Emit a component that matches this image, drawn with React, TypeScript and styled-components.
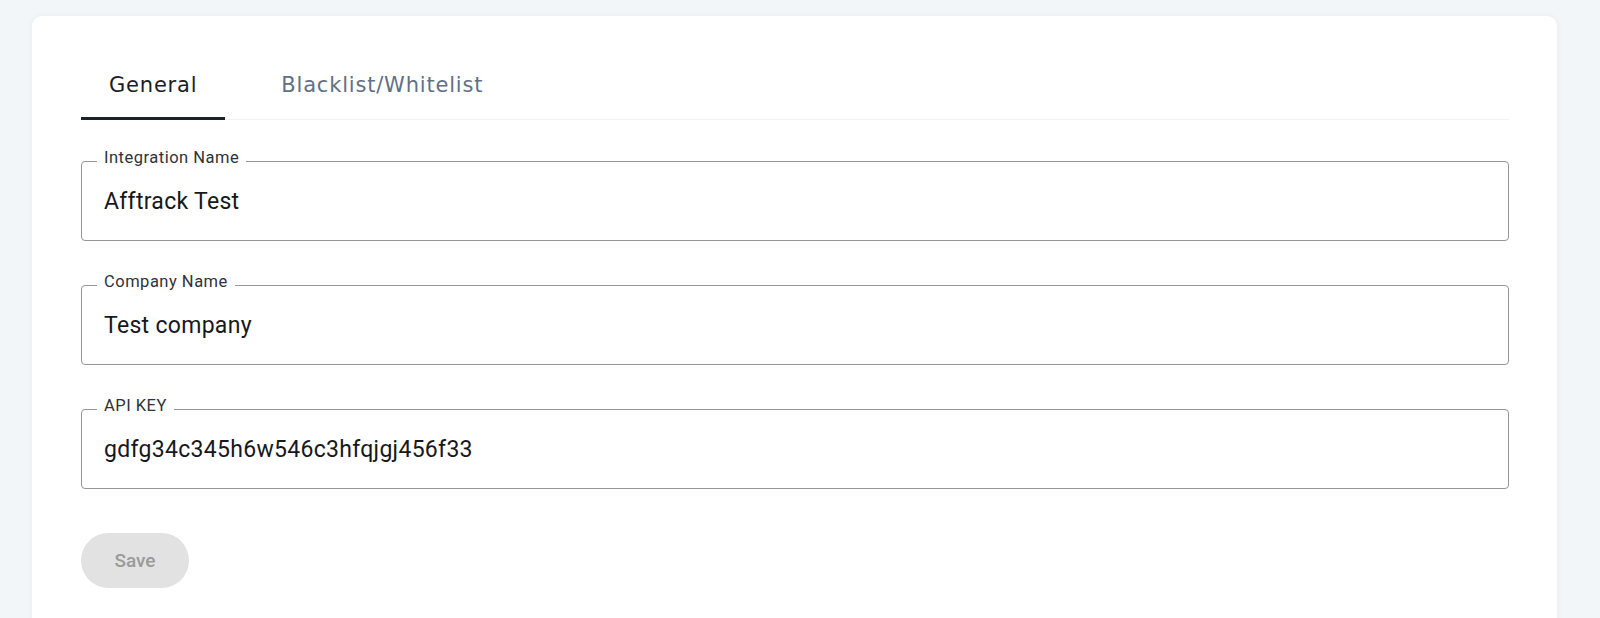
import React from 'react';
import styled, { createGlobalStyle } from 'styled-components';

const GlobalStyle = createGlobalStyle`
    html, body {
        margin: 0;
        padding: 0;
        background-color: #f3f6f9;
        overflow: hidden;
    }
    * {
        box-sizing: border-box;
    }
`

const Page = styled.div`
    width: 1600px;
    height: 618px;
    padding: 16px 43px 0 32px;
    background-color: #f3f6f9;
`

const Card = styled.div`
    background-color: #ffffff;
    border-radius: 10px;
    box-shadow: 0 0 6px rgba(30, 40, 60, 0.05);
    padding: 48px 48px 60px 49px;
    min-height: 640px;
`

const TabBar = styled.div`
    display: flex;
    gap: 28px;
    border-bottom: 1px solid #f1f2f4;
`

const Tab = styled.div<{ $active?: boolean }>`
    padding: 9px 28px 19px;
    margin-bottom: -1px;
    font-family: "DejaVu Sans", sans-serif;
    font-size: 21px;
    line-height: 25px;
    letter-spacing: 0.8px;
    color: ${p => (p.$active ? '#1a1e26' : '#617086')};
    border-bottom: 3px solid ${p => (p.$active ? '#1b222c' : 'transparent')};
    cursor: pointer;
`

const Form = styled.form`
    display: flex;
    flex-direction: column;
    align-items: flex-start;
    gap: 33px;
    margin-top: 30px;
`

const Field = styled.fieldset`
    width: 100%;
    margin: 0;
    padding: 0 22px 25px;
    border: 1px solid #969696;
    border-radius: 4px;
`

const Label = styled.legend`
    margin-left: -7px;
    padding: 0 7px 7px;
    font-family: Roboto, "Liberation Sans", sans-serif;
    font-size: 16.5px;
    line-height: 16px;
    letter-spacing: 0.5px;
    color: #2f3238;
`

const Value = styled.input`
    display: block;
    width: 100%;
    height: 27px;
    margin-top: 15px;
    padding: 0;
    border: none;
    outline: none;
    background: transparent;
    font-family: Roboto, "Liberation Sans", sans-serif;
    font-size: 23px;
    line-height: 27px;
    letter-spacing: 0.3px;
    color: #16181c;
`

const SaveButton = styled.button`
    margin-top: 11px;
    width: 108px;
    height: 55px;
    border: none;
    border-radius: 28px;
    background-color: #e2e2e2;
    color: #9a9a9a;
    font-family: Roboto, "Liberation Sans", sans-serif;
    font-size: 19px;
    font-weight: 500;
`

const fields = [
    { label: 'Integration Name', value: 'Afftrack Test' },
    { label: 'Company Name', value: 'Test company' },
    { label: 'API KEY', value: 'gdfg34c345h6w546c3hfqjgj456f33' },
]

const App = () => {
    return (
        <Page>
            <GlobalStyle />
            <Card>
                <TabBar>
                    <Tab $active>General</Tab>
                    <Tab>Blacklist/Whitelist</Tab>
                </TabBar>
                <Form onSubmit={e => e.preventDefault()}>
                    {fields.map(f => (
                        <Field key={f.label}>
                            <Label>{f.label}</Label>
                            <Value readOnly value={f.value} />
                        </Field>
                    ))}
                    <SaveButton type="submit" disabled>Save</SaveButton>
                </Form>
            </Card>
        </Page>
    )
}

export default App
